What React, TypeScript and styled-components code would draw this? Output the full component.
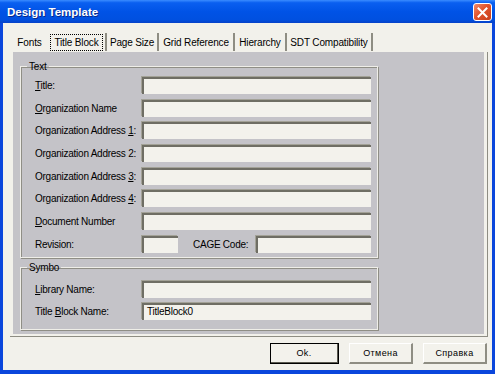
import React from 'react';
import styled, { createGlobalStyle } from 'styled-components';

const GlobalStyle = createGlobalStyle`
  html, body {
    margin: 0;
    padding: 0;
    background: #ffffff;
  }
  body {
    font-family: "Liberation Sans", Arial, sans-serif;
  }
`;

const Window = styled.div`
  width: 495px;
  height: 374px;
  box-sizing: border-box;
  background: #0a46dc;
  padding: 0 3px 4px 3px;
  display: flex;
  flex-direction: column;
`;

const TitleBar = styled.div`
  height: 23px;
  margin: 0 -3px;
  padding: 0 3px 0 7px;
  display: flex;
  align-items: center;
  justify-content: space-between;
  background: linear-gradient(180deg, #3a8cff 0%, #0a5ff0 12%, #0053e6 50%, #0050e0 85%, #0641c8 100%);
`;

const TitleText = styled.span`
  color: #ffffff;
  font-family: "Liberation Sans", Arial, sans-serif;
  font-weight: bold;
  font-size: 11.5px;
  text-shadow: 1px 1px 0 #0a2a8a;
`;

const CloseButton = styled.div`
  width: 19px;
  height: 18px;
  margin-top: 1px;
  box-sizing: border-box;
  border: 1px solid #ffffff;
  border-radius: 3px;
  background: linear-gradient(135deg, #f08a6a 0%, #e0532c 45%, #c8401e 100%);
  display: flex;
  align-items: center;
  justify-content: center;
`;

const Body = styled.div`
  flex: 1;
  background: #f2f1eb;
  display: flex;
  flex-direction: column;
`;

const TabStrip = styled.div`
  display: flex;
  align-items: stretch;
  height: 18px;
  margin: 10px 0 1px 10px;
`;

const Tab = styled.div<{ $sep?: boolean; $w: number }>`
  width: ${p => p.$w}px;
  box-sizing: border-box;
  font-size: 10px;
  letter-spacing: -0.15px;
  color: #000;
  display: flex;
  align-items: center;
  justify-content: center;
  border-right: ${p => (p.$sep ? '2px solid #8e8d83' : '2px solid transparent')};
  white-space: nowrap;
`;

const FocusLabel = styled.span`
  outline: 1px dotted #000;
  outline-offset: 2px;
  padding: 0 1px;
`;

const PanelFrame = styled.div`
  margin-left: 7px;
  width: 478px;
  box-sizing: border-box;
  padding: 0 3px 2px 3px;
  border-right: 1px solid #8e8d83;
  border-bottom: 1px solid #8e8d83;
`;

const Panel = styled.div`
  background: #c4c3c8;
  height: 282px;
  padding: 9px 0 0 7px;
  box-sizing: border-box;
  display: flex;
  flex-direction: column;
  gap: 4px;
`;

const Group = styled.fieldset<{ $h: number; $pt: number; $gap: number }>`
  margin: 0;
  width: 358px;
  height: ${p => p.$h}px;
  box-sizing: border-box;
  border: 1px solid #efeee8;
  box-shadow: inset 1px 1px 0 #8f8e86, 1px 1px 0 #8f8e86;
  padding: ${p => p.$pt}px 5px 0 14px;
  display: flex;
  flex-direction: column;
  gap: ${p => p.$gap}px;
`;

const Legend = styled.legend`
  font-size: 10px;
  letter-spacing: -0.2px;
  padding: 0 2px;
  margin-left: -8px;
  color: #000;
`;

const Row = styled.div`
  display: flex;
  align-items: center;
  height: 17px;
`;

const Label = styled.label<{ $w?: number; $ml?: number }>`
  width: ${p => p.$w ?? 107}px;
  margin-left: ${p => p.$ml ?? 0}px;
  flex: none;
  font-size: 10px;
  letter-spacing: -0.25px;
  color: #000;
  white-space: nowrap;
`;

const Input = styled.div<{ $w: number }>`
  width: ${p => p.$w}px;
  flex: none;
  height: 17px;
  box-sizing: border-box;
  background: #f3f2ec;
  border-top: 2px solid #6f6e64;
  border-left: 2px solid #6f6e64;
  box-shadow: -1px -1px 0 #a3a297;
  font-size: 10px;
  letter-spacing: -0.25px;
  line-height: 14px;
  padding-left: 3px;
  color: #000;
`;

const ButtonRow = styled.div`
  display: flex;
  justify-content: flex-end;
  gap: 10px;
  padding: 6px 5px 0 0;
`;

const Button = styled.div<{ $default?: boolean; $w: number }>`
  width: ${p => p.$w}px;
  height: 21px;
  box-sizing: border-box;
  background: #f3f2ec;
  font-size: 9px;
  letter-spacing: 0.4px;
  display: flex;
  align-items: center;
  justify-content: center;
  color: #000;
  border-top: 1px solid #ffffff;
  border-left: 1px solid #ffffff;
  border-right: 2px solid #8e8d83;
  border-bottom: 2px solid #8e8d83;
  ${p =>
    p.$default &&
    `
    outline: 1px solid #000;
    outline-offset: -1px;
    border-right: 2px solid #5a594f;
    border-bottom: 2px solid #5a594f;
  `}
`;

const textFields: { label: React.ReactNode }[] = [
  { label: <><u>T</u>itle:</> },
  { label: <><u>O</u>rganization Name</> },
  { label: <>Organization Address <u>1</u>:</> },
  { label: <>Organization Address 2:</> },
  { label: <>Organization Address <u>3</u>:</> },
  { label: <>Organization Address <u>4</u>:</> },
  { label: <><u>D</u>ocument Number</> },
];

const tabs = [
  { name: 'Fonts', w: 35 },
  { name: 'Title Block', w: 59 },
  { name: 'Page Size', w: 52 },
  { name: 'Grid Reference', w: 76 },
  { name: 'Hierarchy', w: 52 },
  { name: 'SDT Compatibility', w: 86 },
];

const App: React.FC = () => {
  return (
    <>
      <GlobalStyle />
      <Window>
        <TitleBar>
          <TitleText>Design Template</TitleText>
          <CloseButton>
            <svg width="11" height="11" viewBox="0 0 11 11">
              <path d="M1.5 1.5 L9.5 9.5 M9.5 1.5 L1.5 9.5" stroke="#fff" strokeWidth="2" strokeLinecap="square" />
            </svg>
          </CloseButton>
        </TitleBar>
        <Body>
          <TabStrip>
            {tabs.map((t, i) => (
              <Tab key={t.name} $sep={i > 0} $w={t.w}>
                {i === 1 ? <FocusLabel>{t.name}</FocusLabel> : t.name}
              </Tab>
            ))}
          </TabStrip>
          <PanelFrame>
            <Panel>
              <Group $h={197} $pt={5} $gap={5.7}>
                <Legend>Text</Legend>
                {textFields.map((f, i) => (
                  <Row key={i}>
                    <Label>{f.label}</Label>
                    <Input $w={229} />
                  </Row>
                ))}
                <Row>
                  <Label>Revision:</Label>
                  <Input $w={36} />
                  <Label $w={63} $ml={15}>CAGE Code:</Label>
                  <Input $w={115} />
                </Row>
              </Group>
              <Group $h={68} $pt={8} $gap={5}>
                <Legend>Symbo</Legend>
                <Row>
                  <Label><u>L</u>ibrary Name:</Label>
                  <Input $w={229} />
                </Row>
                <Row>
                  <Label>Title <u>B</u>lock Name:</Label>
                  <Input $w={229}>TitleBlock0</Input>
                </Row>
              </Group>
            </Panel>
          </PanelFrame>
          <ButtonRow>
            <Button $default $w={69}>Ok.</Button>
            <Button $w={64}>Отмена</Button>
            <Button $w={64}>Справка</Button>
          </ButtonRow>
        </Body>
      </Window>
    </>
  );
};

export default App;
